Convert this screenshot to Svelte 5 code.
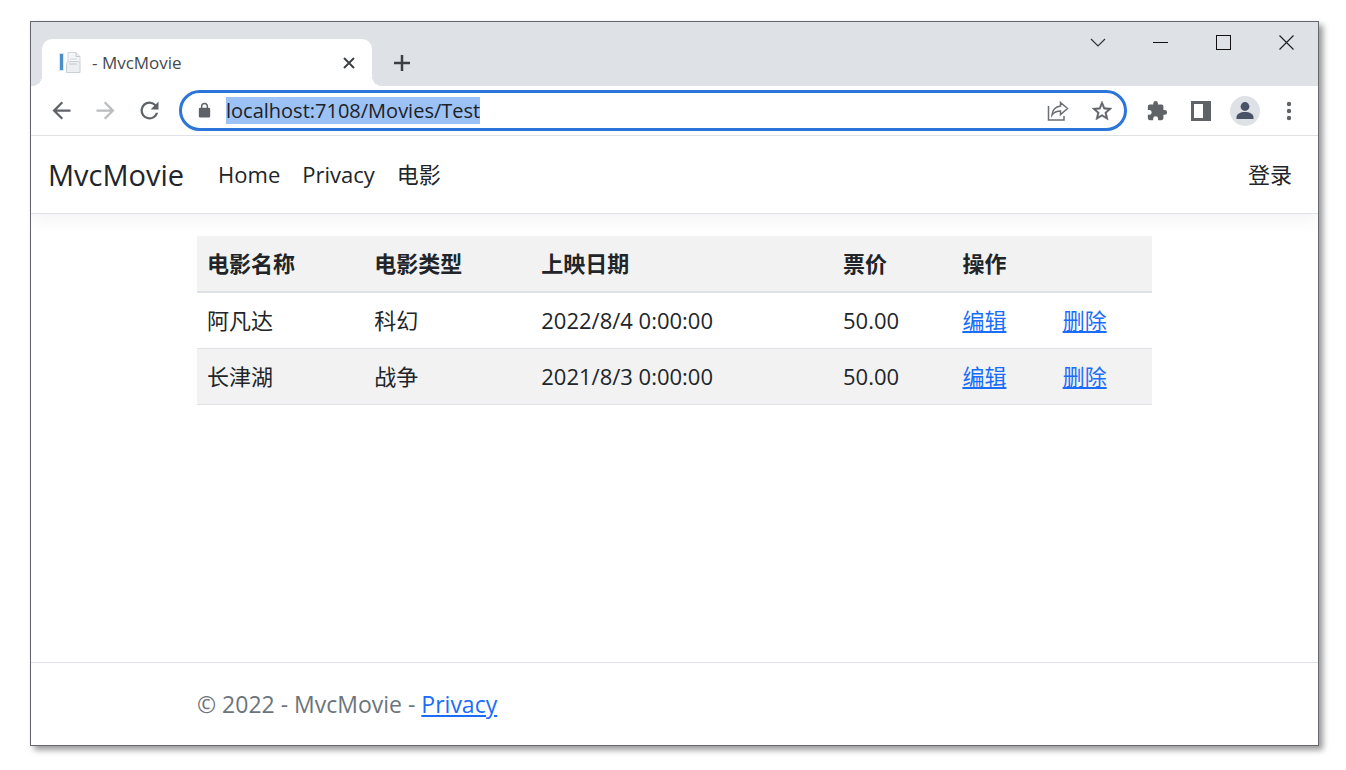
<script>
  import { onMount } from 'svelte';

  let address = $state('localhost:7108/Movies/Test');
  let addressBox;

  const links = ['Home', 'Privacy', '电影'];
  const movies = [
    { title: '阿凡达', genre: '科幻', released: '2022/8/4 0:00:00', price: '50.00' },
    { title: '长津湖', genre: '战争', released: '2021/8/3 0:00:00', price: '50.00' }
  ];

  onMount(() => {
    addressBox.focus();
    addressBox.select();
  });
</script>

<div class="desktop">
  <div class="window">
    <div class="titlebar">
      <div class="tab">
        <svg class="favicon" width="24" height="24" viewBox="0 0 24 24" aria-hidden="true">
          <rect x="1" y="2" width="5" height="18" fill="#d6e6f2" />
          <rect x="2" y="3" width="3" height="16" fill="#4a8fc7" />
          <path d="M10 1.5h8l4 4v7h-12z" fill="#f3f5f6" stroke="#d3d7da" />
          <path d="M18 1.5v4h4" fill="none" stroke="#c3c8cc" />
          <path d="M12 8h7M12 10.500h6" stroke="#d0d4d7" />
          <path d="M8.500 12.500l2-2h10l1.500 2v9h-13.500z" fill="#eceff1" stroke="#c9ced2" />
          <path d="M11 13h8" stroke="#c3c8cc" />
        </svg>
        <span class="tab-title">- MvcMovie</span>
        <button aria-label="Close tab">
          <svg width="14" height="14" viewBox="0 0 14 14"><path d="M2 2l10 10M12 2L2 12" fill="none" stroke="#3f4246" stroke-width="2" /></svg>
        </button>
      </div>
      <button class="new-tab" aria-label="New tab">
        <svg width="18" height="18" viewBox="0 0 18 18"><path d="M9 1v16M1 9h16" stroke="#3c4043" stroke-width="2.500" /></svg>
      </button>
      <div class="caption">
        <button aria-label="Search tabs">
          <svg width="16" height="16" viewBox="0 0 16 16"><path d="M1 4l7 7 7-7" fill="none" stroke="#333" stroke-width="1.200" /></svg>
        </button>
        <button aria-label="Minimize">
          <svg width="16" height="16" viewBox="0 0 16 16"><path d="M0 7.500h15" stroke="#111" /></svg>
        </button>
        <button aria-label="Maximize">
          <svg width="16" height="16" viewBox="0 0 16 16"><rect x=".5" y=".5" width="14" height="14" fill="none" stroke="#111" /></svg>
        </button>
        <button aria-label="Close">
          <svg width="16" height="16" viewBox="0 0 16 16"><path d="M.5 .5l14 14M14.500 .5l-14 14" stroke="#222" stroke-width="1.200" /></svg>
        </button>
      </div>
    </div>

    <div class="toolbar">
      <button class="tool" aria-label="Back">
        <svg width="27" height="27" viewBox="0 0 24 24"><path d="M20 11H7.830l5.590-5.590L12 4l-8 8 8 8 1.410-1.410L7.830 13H20z" fill="#5f6368" /></svg>
      </button>
      <button class="tool" aria-label="Forward">
        <svg width="27" height="27" viewBox="0 0 24 24"><path d="M12 4l-1.410 1.410L16.170 11H4v2h12.170l-5.580 5.590L12 20l8-8z" fill="#babcbe" /></svg>
      </button>
      <button class="tool" aria-label="Reload">
        <svg width="27" height="27" viewBox="0 0 24 24"><path d="M17.650 6.350A7.960 7.960 0 0 0 12 4a8 8 0 1 0 7.730 10h-2.080A6 6 0 1 1 12 6c1.660 0 3.140.690 4.220 1.780L13 11h7V4z" fill="#5f6368" /></svg>
      </button>
      <form class="omnibox" onsubmit={(e) => e.preventDefault()}>
        <button class="tool" type="button" aria-label="Site information">
          <svg width="17" height="17" viewBox="0 0 24 24"><path d="M18 8h-1V6A5 5 0 0 0 7 6v2H6a2 2 0 0 0-2 2v10a2 2 0 0 0 2 2h12a2 2 0 0 0 2-2V10a2 2 0 0 0-2-2zM9 6a3 3 0 0 1 6 0v2H9z" fill="#5f6368" /></svg>
        </button>
        <input type="text" aria-label="Address" bind:value={address} bind:this={addressBox} spellcheck="false" />
        <div class="page-actions">
          <button class="tool" type="button" aria-label="Share this page">
            <svg width="24" height="24" viewBox="0 0 24 24"><path d="M2.500 7v14h15.500v-4M14.500 3.500l7 6-7 6v-3.500c-4 0-6.500 1.300-8.500 4 .5-5 3.500-8.300 8.500-9z" fill="none" stroke="#6b6e72" stroke-width="1.500" /></svg>
          </button>
          <button class="tool" type="button" aria-label="Bookmark this tab">
            <svg width="24" height="24" viewBox="0 0 24 24"><path d="M22 9.240l-7.190-.620L12 2 9.190 8.630 2 9.240l5.460 4.730L5.820 21 12 17.270 18.180 21l-1.630-7.030zM12 15.400l-3.760 2.270 1-4.280-3.320-2.880 4.380-.380L12 6.100l1.710 4.040 4.380.380-3.320 2.880 1 4.280z" fill="#5f6368" stroke="#5f6368" stroke-width=".4" /></svg>
          </button>
        </div>
      </form>
      <button class="tool" aria-label="Extensions">
        <svg width="22" height="22" viewBox="0 0 24 24"><path d="M20.500 11H19V7a2 2 0 0 0-2-2h-4V3.500a2.500 2.500 0 0 0-5 0V5H4a2 2 0 0 0-2 2v3.800h1.500a2.700 2.700 0 0 1 0 5.400H2V20a2 2 0 0 0 2 2h3.800v-1.500a2.700 2.700 0 0 1 5.400 0V22H17a2 2 0 0 0 2-2v-4h1.500a2.500 2.500 0 0 0 0-5z" fill="#5f6368" /></svg>
      </button>
      <button class="tool" aria-label="Side panel">
        <svg width="20" height="20" viewBox="0 0 20 20"><path d="M0 0h20v20H0zM3 3v14h9V3z" fill="#5f6368" fill-rule="evenodd" /></svg>
      </button>
      <button class="tool" aria-label="Profile">
        <svg width="30" height="30" viewBox="0 0 30 30"><circle cx="15" cy="15" r="15" fill="#dee1e6" /><circle cx="15" cy="10.500" r="4.400" fill="#4a5268" /><path d="M6.500 23v-2c0-3 4-5 8.500-5s8.500 2 8.500 5v2z" fill="#4a5268" /></svg>
      </button>
      <button class="tool" aria-label="Menu">
        <svg width="20" height="20" viewBox="0 0 20 20" fill="#5f6368"><circle cx="10" cy="3" r="2.200" /><circle cx="10" cy="10" r="2.200" /><circle cx="10" cy="17" r="2.200" /></svg>
      </button>
    </div>

    <div class="page">
      <nav>
        <a class="brand" href="#home">MvcMovie</a>
        {#each links as link}
          <a href="#{link}">{link}</a>
        {/each}
        <a class="login" href="#login">登录</a>
      </nav>

      <main class="container">
        <table>
          <colgroup>
            <col style:width="17.5%" />
            <col style:width="17.5%" />
            <col style:width="31.6%" />
            <col style:width="12.5%" />
            <col style:width="10.5%" />
            <col />
          </colgroup>
          <thead>
            <tr><th>电影名称</th><th>电影类型</th><th>上映日期</th><th>票价</th><th colspan="2">操作</th></tr>
          </thead>
          <tbody>
            {#each movies as movie}
              <tr>
                <td>{movie.title}</td>
                <td>{movie.genre}</td>
                <td>{movie.released}</td>
                <td>{movie.price}</td>
                <td><a href="#edit">编辑</a></td>
                <td><a href="#delete">删除</a></td>
              </tr>
            {/each}
          </tbody>
        </table>
      </main>

      <footer>
        <div class="container">© 2022 - MvcMovie - <a href="#privacy">Privacy</a></div>
      </footer>
    </div>
  </div>
</div>

<style>
  :global(body) {
    margin: 0;
    background: #fff;
  }

  .desktop {
    display: flex;
    box-sizing: border-box;
    min-height: 100vh;
    padding: 21px 27px 24px 30px;
    font-family: 'Open Sans', 'Noto Sans CJK SC', sans-serif;
    color: #212529;
  }

  .window {
    flex: 1;
    min-width: 0;
    display: flex;
    flex-direction: column;
    border: 1px solid #63666a;
    background: #fff;
    box-shadow: 4px 4px 6px rgba(0, 0, 0, 0.4);
  }

  button {
    display: flex;
    align-items: center;
    justify-content: center;
    flex: none;
    padding: 0;
    border: 0;
    background: none;
  }

  svg {
    display: block;
    flex: none;
  }

  .titlebar {
    display: flex;
    align-items: flex-end;
    height: 64px;
    padding-left: 11px;
    background: #dee1e6;
  }

  .tab {
    position: relative;
    display: flex;
    align-items: center;
    box-sizing: border-box;
    flex: 0 1 330px;
    height: 47px;
    padding: 0 16px;
    border-radius: 10px 10px 0 0;
    background: #fff;
  }

  .tab::before,
  .tab::after {
    content: '';
    position: absolute;
    bottom: 0;
    width: 10px;
    height: 10px;
  }

  .tab::before {
    right: 100%;
    background: radial-gradient(circle at 0 0, transparent 10px, #fff 10px);
  }

  .tab::after {
    left: 100%;
    background: radial-gradient(circle at 100% 0, transparent 10px, #fff 10px);
  }

  .tab-title {
    flex: 1;
    padding-left: 10px;
    font-size: 17px;
    line-height: 24px;
    color: #45494d;
  }

  .new-tab {
    width: 60px;
    height: 47px;
  }

  .caption {
    display: flex;
    align-self: flex-start;
    margin-left: auto;
  }

  .caption button {
    width: 63px;
    height: 42px;
  }

  .toolbar {
    display: flex;
    align-items: center;
    gap: 16px;
    height: 49px;
    padding: 0 15px 0 16px;
    border-bottom: 1px solid #dfe1e5;
  }

  .tool {
    width: 28px;
    height: 30px;
  }

  .omnibox {
    flex: 1;
    min-width: 0;
    display: flex;
    align-items: center;
    box-sizing: border-box;
    gap: 8px;
    height: 41px;
    padding: 0 8px;
    border: 3px solid #2b75db;
    border-radius: 21px;
  }

  input {
    flex: 1;
    min-width: 0;
    padding: 0;
    border: 0;
    outline: 0;
    background: none;
    font: 20px 'Open Sans', sans-serif;
    color: #202124;
  }

  input::selection {
    background: #9cc1f5;
    color: #202124;
  }

  .page-actions {
    display: flex;
    gap: 16px;
  }

  .page {
    flex: 1;
    display: flex;
    flex-direction: column;
    overflow: hidden;
    font-size: 22px;
    line-height: 33px;
  }

  nav {
    display: flex;
    align-items: center;
    gap: 22px;
    height: 77px;
    padding: 0 26px 0 17px;
    border-bottom: 1px solid #dee2e6;
    box-shadow: 0 6px 18px rgba(0, 0, 0, 0.05);
  }

  nav a {
    color: #212529;
    text-decoration: none;
  }

  nav .brand {
    margin-right: 12px;
    font-size: 29px;
  }

  .login {
    margin-left: auto;
  }

  .container {
    box-sizing: border-box;
    width: 100%;
    max-width: 955px;
    margin: 0 auto;
  }

  main {
    flex: 1;
    padding-top: 22px;
  }

  table {
    width: 100%;
    table-layout: fixed;
    border-collapse: collapse;
  }

  th,
  td {
    padding: 11px 10px;
    border-bottom: 1px solid #dee2e6;
    text-align: left;
  }

  th {
    border-bottom-width: 2px;
    background: #f2f2f2;
  }

  tbody tr:nth-child(even) {
    background: #f2f2f2;
  }

  td a,
  footer a {
    color: #1a6dfa;
  }

  footer {
    padding: 25px 0 24px;
    border-top: 1px solid #dee2e6;
    font-size: 23px;
    color: #6c757d;
  }
</style>
